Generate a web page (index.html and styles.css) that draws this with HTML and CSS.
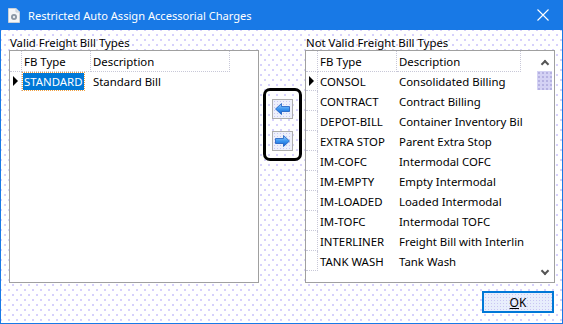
FILE: index.html
```html
<!DOCTYPE html>
<html>
<head>
  <meta charset="UTF-8" />
  <title>Restricted Auto Assign Accessorial Charges</title>
  <link rel="stylesheet" href="styles.css">
</head>
<body>
  <div class="window">
    <div class="titlebar">
      <svg class="app-icon" width="12" height="15" viewBox="0 0 12 15">
        <path d="M0.5 0.5 H8 L11.5 4 V14.5 H0.5 Z" fill="#f4f6f8" stroke="#c8d0d8"/>
        <path d="M8 0.5 V4 H11.5" fill="#dfe4ea" stroke="#c8d0d8"/>
        <circle cx="6" cy="9" r="3" fill="#8a96a3"/>
        <circle cx="6" cy="9" r="1.2" fill="#e8ecf0"/>
      </svg>
      <span class="title">Restricted Auto Assign Accessorial Charges</span>
      <svg class="close" width="12" height="12" viewBox="0 0 12 12">
        <path d="M0.5 0.5 L11.5 11.5 M11.5 0.5 L0.5 11.5" stroke="#fff" stroke-width="1.1"/>
      </svg>
    </div>

    <div class="content">
      <!-- Valid list -->
      <div class="list-col">
        <div class="list-label">Valid Freight Bill Types</div>
        <div class="grid grid-left">
          <div class="rows">
            <div class="row head">
              <div class="rowhead"></div>
              <div class="cell">FB Type</div>
              <div class="cell">Description</div>
            </div>
            <div class="row">
              <div class="rowhead current"><span class="marker"></span></div>
              <div class="cell"><span class="selected">STANDARD</span></div>
              <div class="cell">Standard Bill</div>
            </div>
          </div>
        </div>
      </div>

      <!-- Move buttons -->
      <div class="mover-col">
        <div class="mover">
          <button class="move-btn" title="Move left">
            <svg width="15" height="12" viewBox="0 0 15 12">
              <defs>
                <linearGradient id="ga" x1="0" y1="0" x2="0" y2="1">
                  <stop offset="0" stop-color="#9fd0ff"/>
                  <stop offset="0.5" stop-color="#3d96f0"/>
                  <stop offset="1" stop-color="#1260d0"/>
                </linearGradient>
              </defs>
              <path d="M0.5 6 L6.5 0.5 V3.5 H14.5 V8.5 H6.5 V11.5 Z" fill="url(#ga)" stroke="#1a5cc0" stroke-width="0.8"/>
            </svg>
          </button>
          <button class="move-btn" title="Move right">
            <svg width="15" height="12" viewBox="0 0 15 12">
              <defs>
                <linearGradient id="gb" x1="0" y1="0" x2="0" y2="1">
                  <stop offset="0" stop-color="#9fd0ff"/>
                  <stop offset="0.5" stop-color="#3d96f0"/>
                  <stop offset="1" stop-color="#1260d0"/>
                </linearGradient>
              </defs>
              <path d="M14.5 6 L8.5 0.5 V3.5 H0.5 V8.5 H8.5 V11.5 Z" fill="url(#gb)" stroke="#1a5cc0" stroke-width="0.8"/>
            </svg>
          </button>
        </div>
      </div>

      <!-- Not valid list -->
      <div class="list-col">
        <div class="list-label">Not Valid Freight Bill Types</div>
        <div class="grid grid-right">
          <div class="rows">
            <div class="row head">
              <div class="rowhead"></div>
              <div class="cell">FB Type</div>
              <div class="cell">Description</div>
            </div>
            <div class="row">
              <div class="rowhead current"><span class="marker"></span></div>
              <div class="cell">CONSOL</div>
              <div class="cell">Consolidated Billing</div>
            </div>
            <div class="row">
              <div class="rowhead"></div>
              <div class="cell">CONTRACT</div>
              <div class="cell">Contract Billing</div>
            </div>
            <div class="row">
              <div class="rowhead"></div>
              <div class="cell">DEPOT-BILL</div>
              <div class="cell">Container Inventory Bil</div>
            </div>
            <div class="row">
              <div class="rowhead"></div>
              <div class="cell">EXTRA STOP</div>
              <div class="cell">Parent Extra Stop</div>
            </div>
            <div class="row">
              <div class="rowhead"></div>
              <div class="cell">IM-COFC</div>
              <div class="cell">Intermodal COFC</div>
            </div>
            <div class="row">
              <div class="rowhead"></div>
              <div class="cell">IM-EMPTY</div>
              <div class="cell">Empty Intermodal</div>
            </div>
            <div class="row">
              <div class="rowhead"></div>
              <div class="cell">IM-LOADED</div>
              <div class="cell">Loaded Intermodal</div>
            </div>
            <div class="row">
              <div class="rowhead"></div>
              <div class="cell">IM-TOFC</div>
              <div class="cell">Intermodal TOFC</div>
            </div>
            <div class="row">
              <div class="rowhead"></div>
              <div class="cell">INTERLINER</div>
              <div class="cell">Freight Bill with Interlin</div>
            </div>
            <div class="row">
              <div class="rowhead"></div>
              <div class="cell">TANK WASH</div>
              <div class="cell">Tank Wash</div>
            </div>
          </div>
          <div class="scrollbar">
            <span class="chev up"></span>
            <div class="track"><div class="thumb"></div></div>
            <span class="chev down"></span>
          </div>
        </div>
      </div>
    </div>

    <div class="footer">
      <button class="ok-btn"><u>O</u>K</button>
    </div>
  </div>
</body>
</html>
```

FILE: styles.css
```css
* {
  margin: 0;
  padding: 0;
  box-sizing: border-box;
}

body {
  font-family: 'Noto Sans', 'Segoe UI', sans-serif;
  font-size: 11.4px;
  color: #000;
  background: #fff;
}

.window {
  width: 563px;
  height: 324px;
  border: 1px solid #1879e6;
  border-top: none;
  background-color: #fff;
  background-image:
    radial-gradient(circle, #d6d0fb 0.7px, transparent 1px),
    radial-gradient(circle, #d6d0fb 0.7px, transparent 1px);
  background-size: 8px 10px;
  background-position: 0 0, 4px 5px;
}

.titlebar {
  height: 30px;
  margin: 0 -1px;
  background: #1879e6;
  color: #fff;
  display: flex;
  align-items: center;
  padding-left: 8px;
}

.app-icon {
  margin-right: 8px;
}

.title {
  flex: 1;
  font-size: 11.1px;
}

.close {
  margin-right: 14px;
}

.content {
  display: flex;
  padding: 5px 0 0 8px;
}

.list-col {
  width: 250px;
}

.list-label {
  height: 15px;
  line-height: 14px;
  padding: 1px 0 0 1px;
}

.grid {
  height: 233px;
  background: #fff;
  border: 1px solid #a0a0a0;
  display: flex;
}

.rows {
  flex: 1;
}

.row {
  display: grid;
  height: 20px;
  line-height: 18px;
}

.grid-left .row {
  grid-template-columns: 12px 69px 139px;
}

.grid-right .row {
  grid-template-columns: 12px 79px 124px;
}

.row.head .cell {
  border-right: 1px dotted #c8c8d8;
  border-bottom: 1px dotted #c8c8d8;
}

.rowhead {
  border-right: 1px dotted #c8c8d8;
  border-bottom: 1px dotted #c8c8d8;
  position: relative;
}

.grid-left .row:not(.head) .rowhead {
  border-bottom: none;
}

.cell {
  padding: 2px 0 0 2px;
  white-space: nowrap;
}

.marker {
  position: absolute;
  left: 3px;
  top: 5px;
  border-left: 5px solid #000;
  border-top: 5px solid transparent;
  border-bottom: 5px solid transparent;
}

.selected {
  background: #0078d7;
  color: #fff;
  display: inline-block;
  height: 17px;
  line-height: 17px;
  margin: -1px 0 0 -1px;
  padding: 0 1px;
  outline: 1px dotted #f0a040;
}

.mover-col {
  width: 46px;
  padding: 53px 0 0 4px;
}

.mover {
  width: 39px;
  height: 73px;
  border: 3px solid #000;
  border-radius: 7px;
  display: flex;
  flex-direction: column;
  align-items: center;
  gap: 12px;
  padding-top: 8px;
}

.move-btn {
  width: 21px;
  height: 20px;
  border: 1px solid #adadad;
  background-color: #eef0fb;
  background-image: radial-gradient(circle, #c9c6f2 0.6px, transparent 1px);
  background-size: 3px 3px;
  display: flex;
  align-items: center;
  justify-content: center;
}

.scrollbar {
  width: 17px;
  display: flex;
  flex-direction: column;
  align-items: center;
  margin-right: 1px;
}

.chev {
  width: 6px;
  height: 6px;
  border-left: 2px solid #555;
  border-top: 2px solid #555;
}

.chev.up {
  transform: rotate(45deg);
  margin-top: 10px;
}

.chev.down {
  transform: rotate(225deg);
  margin-bottom: 8px;
}

.track {
  flex: 1;
  width: 100%;
  padding-top: 4px;
}

.thumb {
  height: 19px;
  width: 15px;
  margin: 0 auto;
  background-color: #d4d2f4;
  background-image: radial-gradient(circle, #aaa6dc 0.6px, transparent 1px);
  background-size: 4px 4px;
}

.footer {
  display: flex;
  justify-content: flex-end;
  padding: 8px 8px 0 0;
}

.ok-btn {
  width: 72px;
  height: 22px;
  border: 2px solid #0078d7;
  background-color: #e8eefc;
  background-image: radial-gradient(circle, #c9c6f2 0.6px, transparent 1px);
  background-size: 3px 3px;
  font-family: 'Noto Sans', 'Segoe UI', sans-serif;
  font-size: 12px;
  color: #000;
}

.ok-btn u {
  text-decoration: underline;
}
```
